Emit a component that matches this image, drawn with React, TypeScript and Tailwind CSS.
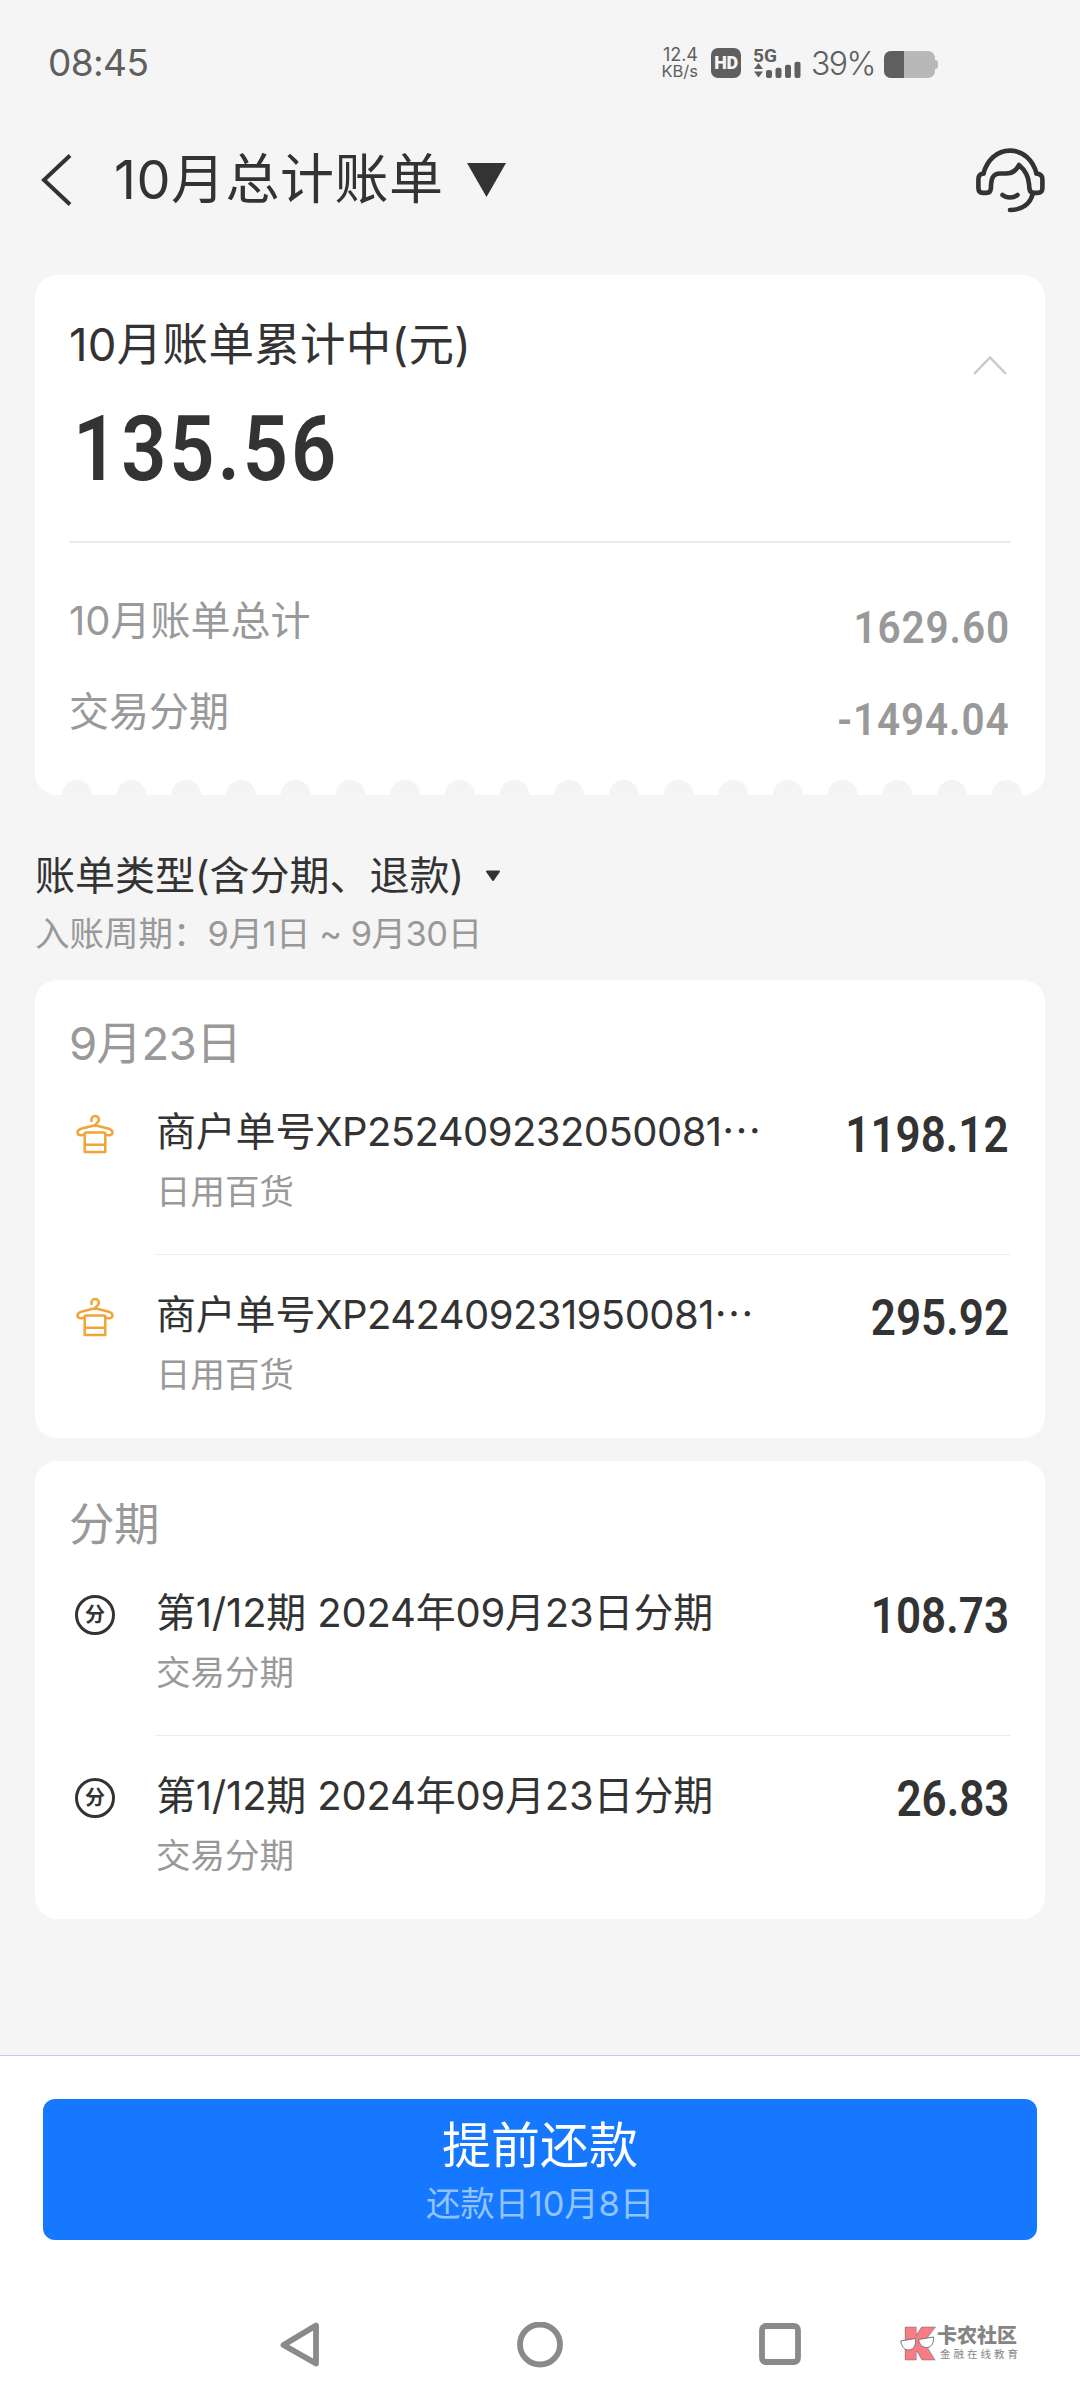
import type { ReactNode } from "react";
import clsx from "clsx";

type Entry = {
  title: string;
  serial?: string;
  category: string;
  amount: string;
};

const PURCHASES: Entry[] = [
  { title: "商户单号", serial: "XP252409232050081", category: "日用百货", amount: "1198.12" },
  { title: "商户单号", serial: "XP242409231950081", category: "日用百货", amount: "295.92" },
];

const INSTALLMENTS: Entry[] = [
  { title: "第1/12期 2024年09月23日分期", category: "交易分期", amount: "108.73" },
  { title: "第1/12期 2024年09月23日分期", category: "交易分期", amount: "26.83" },
];

const SUMMARY = [
  { label: "10月账单总计", amount: "1629.60" },
  { label: "交易分期", amount: "-1494.04" },
];

// half circles cut out of the bottom edge of the summary card
const NOTCHES = Array.from({ length: 18 }, (_, i) => 41.8 + i * 54.7);

function StatusBar() {
  return (
    <div className="flex h-[126px] items-center pl-[48px] pr-[142px] text-[#5f5f5f]">
      <span className="text-[37px] leading-[44px] tracking-[-0.6px]">08:45</span>
      <div className="ml-auto flex items-center">
        <div className="flex w-[38px] flex-col items-end">
          <span className="text-[18px] leading-[17px]">12.4</span>
          <span className="text-[16.5px] leading-[17px]">KB/s</span>
        </div>
        <div className="ml-[13px] flex h-[30px] w-[30px] items-center justify-center rounded-[7px] bg-[#5f5f5f] font-['Roboto'] text-[18px] font-black leading-none tracking-[-0.5px] text-[#f5f5f5]">
          HD
        </div>
        <svg className="ml-[12px] overflow-visible" width="50" height="30" viewBox="0 0 50 30" fill="currentColor">
          <text x="0" y="14" fontFamily="Roboto" fontWeight="700" fontSize="19" textLength="24" lengthAdjust="spacingAndGlyphs">
            5G
          </text>
          <path d="M5.5 15l4.5 6H1zM5.5 29.5l4.5-6H1z" />
          <rect x="13" y="22" width="6" height="8" rx="2" />
          <rect x="22.5" y="19.7" width="6" height="10.3" rx="2" />
          <rect x="32" y="16.7" width="6" height="13.3" rx="2" />
          <rect x="41.5" y="13.7" width="6" height="16.3" rx="2" />
        </svg>
        <span className="ml-[8px] mt-[2px] w-[64px] whitespace-nowrap text-[32px] font-light leading-[40px] tracking-[-1.6px]">39%</span>
        <svg className="ml-[9px] mt-[3px]" width="54" height="27" viewBox="0 0 54 27">
          <rect width="51" height="27" rx="7" fill="#b8b8b8" />
          <path d="M50 9h1a3 3 0 0 1 3 3v3a3 3 0 0 1-3 3h-1z" fill="#b8b8b8" />
          <path d="M7 0h13v27H7a7 7 0 0 1-7-7V7a7 7 0 0 1 7-7z" fill="#5f5f5f" />
        </svg>
      </div>
    </div>
  );
}

function Header() {
  return (
    <div className="flex h-[108px] items-center pl-[40px] pr-[35px]">
      <svg width="32" height="52" viewBox="0 0 32 52" fill="none" stroke="#333" strokeWidth="4">
        <path d="M30 1.5L4 26l26 24.5" />
      </svg>
      <h1 className="ml-[42px] whitespace-nowrap text-[54px] leading-[64px] tracking-[0.5px]">10月总计账单</h1>
      <svg className="ml-[23px]" width="39" height="34" viewBox="0 0 39 34" fill="#333">
        <path d="M0 0h39L19.5 34z" />
      </svg>
      <svg
        className="ml-auto"
        width="69"
        height="65"
        viewBox="0 0 69 65"
        fill="none"
        stroke="#333"
        strokeWidth="4.6"
        strokeLinecap="round"
        strokeLinejoin="round"
      >
        <path d="M7.5 25.5C11 12 21 2.6 34 2.6S57 12 60.5 25.5" />
        <path d="M7.5 25.5C4 26 2.4 28 2.4 31v9c0 3.5 1.6 4.9 4.4 4.9h3.5c3 0 4.4-1.6 4.6-4.6C15 31 16.5 25.5 24 25.5h6c6 0 10-2.5 13-8.5 7 6 9.5 12 10 19 .3 5.5.5 8.9 5 8.9h3.5c3.3 0 4.900-1.900 4.900-4.900v-9c0-3-1.900-5-5.900-5.500" />
        <path d="M57 45C54.5 56 46 62 34 62" />
        <path d="M26.5 47c4 3.300 11 3.300 15 0" />
      </svg>
    </div>
  );
}

function SummaryCard() {
  return (
    <section className="relative mx-[35px] mt-[41px] h-[520px] overflow-hidden rounded-[22px] bg-white px-[34px] pt-[40px]">
      <div className="flex items-start justify-between">
        <h2 className="text-[45.5px] leading-[60px] tracking-[0.3px]">10月账单累计中(元)</h2>
        <svg className="mr-[4px] mt-[40px]" width="34" height="20" viewBox="0 0 34 20" fill="none" stroke="#c9c9c9" strokeWidth="2.5">
          <path d="M1 19L17 2.5 33 19" />
        </svg>
      </div>
      <div className="ml-[4px] mt-[21px] origin-left scale-x-[0.88] font-['Roboto'] text-[90px] font-semibold leading-[108px] tracking-[3.3px]">
        135.56
      </div>
      <div className="mt-[37px] h-[2px] bg-[#ebebeb]" />
      <div className="mt-[32px] text-[#999]">
        {SUMMARY.map(({ label, amount }) => (
          <div key={label} className="flex h-[91.5px] items-center justify-between">
            <span className="text-[40px] leading-[50px]">{label}</span>
            <span className="mr-[1px] origin-right scale-x-[0.9] pt-[15px] font-['Roboto'] text-[45px] font-semibold leading-[50px] tracking-[1px]">
              {amount}
            </span>
          </div>
        ))}
      </div>
      <svg className="absolute bottom-0 left-0" width="1011" height="15" viewBox="0 0 1011 15" fill="#f4f4f4">
        {NOTCHES.map((x) => (
          <circle key={x} cx={x} cy="15" r="15" />
        ))}
      </svg>
    </section>
  );
}

function HangerIcon() {
  return (
    <svg width="52" height="52" viewBox="0 0 52 52" fill="none" stroke="#efa537" strokeWidth="2.5" strokeLinecap="round" strokeLinejoin="round">
      <path d="M22.5 13c-.5-3 1-5 3.7-5s4.3 2.5 3.5 5c-.6 1.8-3.5 2-3.5 5" />
      <path d="M15.7 26.5c-4 1.5-7.2.6-7.2-2s2-3.3 4.5-4L26 17.300l13 3.200c2.500.7 4.500 1.400 4.500 4s-3.200 3.500-7.200 2" />
      <path d="M15.7 26c0-1 .6-1.500 1.500-1.500h17.600c.9 0 1.500.5 1.500 1.500v18H15.700zM15.700 36.700h20.600" />
    </svg>
  );
}

function InstallmentIcon() {
  return (
    <div className="flex h-[40px] w-[40px] items-center justify-center rounded-full border-[3px] border-[#333] text-[20px] font-bold leading-none">
      分
    </div>
  );
}

function EntryCard({ title, entries, icon, className }: { title: string; entries: Entry[]; icon: ReactNode; className?: string }) {
  return (
    <section className={clsx("mx-[35px] h-[458px] rounded-[22px] bg-white pl-[34px] pr-[35px]", className)}>
      <h3 className="h-[92px] pt-[34px] text-[45.5px] leading-[59px] tracking-[-0.6px] text-[#999]">{title}</h3>
      {entries.map((entry, i) => (
        <div key={entry.amount} className="flex h-[183px]">
          <div className="mr-[34px] mt-[36px] flex h-[52px] w-[52px] items-center justify-center">{icon}</div>
          <div className={clsx("flex flex-1 justify-between pt-[35px]", i < entries.length - 1 && "border-b border-[#ececec]")}>
            <div className="pl-[1px]">
              <div className="h-[50px] whitespace-nowrap text-[40px] leading-[50px] tracking-[-0.2px]">
                {entry.title}
                {entry.serial && (
                  <>
                    <span className="tracking-[-0.55px]">{entry.serial}</span>
                    <span className="font-['Noto_Sans_CJK_SC'] leading-none">…</span>
                  </>
                )}
              </div>
              <div className="mt-[11px] text-[34.5px] leading-[48px] text-[#999]">{entry.category}</div>
            </div>
            <span className="mr-[1px] h-[54px] origin-right scale-x-[0.88] pt-[2px] font-['Roboto'] text-[50px] font-semibold leading-[52px]">
              {entry.amount}
            </span>
          </div>
        </div>
      ))}
    </section>
  );
}

function Watermark() {
  return (
    <div className="absolute left-[900px] top-[44px] flex text-[#858585]">
      <svg className="overflow-visible" width="35" height="37" viewBox="0 0 35 37" fontFamily="Roboto" fontWeight="900" fontSize="40" strokeLinejoin="miter">
        <text x="5" y="33" textLength="26" lengthAdjust="spacingAndGlyphs" fill="#8a7a7c" stroke="#8a7a7c" strokeWidth="4.5">
          K
        </text>
        <text x="5" y="33" textLength="26" lengthAdjust="spacingAndGlyphs" fill="#f97c84" stroke="#f97c84" strokeWidth="3" aria-hidden>
          K
        </text>
        <path d="M.7 16l14.5-2.5c1.5 5-1 11-6 11.5S1.5 21 .7 16z" fill="#fff" stroke="#777" />
        <path d="M18.5 14.5l15-2.5c.5 5-1.5 10-6 10.5-5 .5-8-3-9-8z" fill="#fff" stroke="#777" />
      </svg>
      <div className="ml-[2px] flex flex-col">
        <span className="text-[20px] font-black leading-[22px]">卡农社区</span>
        <span className="ml-[3px] mt-[1px] text-[10.5px] leading-[13px] tracking-[3px]">金融在线教育</span>
      </div>
    </div>
  );
}

function Footer() {
  return (
    <footer className="mt-auto h-[353px] border-t border-[#b9d0e6] bg-white">
      <button className="mx-[43px] mt-[43px] flex h-[141px] w-[994px] flex-col items-center rounded-[12px] bg-[#1677ff] pt-[16px]">
        <span className="text-[49px] leading-[62px] text-white">提前还款</span>
        <span className="mt-[3px] text-[34.5px] leading-[48px] tracking-[-0.2px] text-[#8fc4ff]">还款日10月8日</span>
      </button>
      <div className="relative mt-[41px] flex h-[126px] items-start pl-[278px] pt-[41px]">
        <svg className="w-[526px]" height="50" viewBox="0 0 526 50" fill="none" stroke="#8a8a8a" strokeWidth="5.8" strokeLinejoin="round">
          <path d="M5.5 23L38 3.5v38z" />
          <circle cx="262" cy="22.5" r="20" />
          <rect x="484" y="4" width="36" height="36" rx="4" />
        </svg>
        <Watermark />
      </div>
    </footer>
  );
}

export default function App() {
  return (
    <div className="flex h-[2408px] w-[1080px] flex-col overflow-hidden bg-[#f5f5f5] font-['Inter','Noto_Sans_CJK_SC',sans-serif] text-[#333]" lang="zh-CN">
      <StatusBar />
      <Header />
      <SummaryCard />
      <div className="mt-[51px] pl-[35px]">
        <div className="flex items-center text-[40px] leading-[60px]">
          账单类型(含分期、退款)
          <svg className="ml-[21px]" width="16" height="12" viewBox="0 0 16 12" fill="#333" stroke="#333" strokeWidth="2" strokeLinejoin="round">
            <path d="M2 1.5h12L8 10z" />
          </svg>
        </div>
        <div className="mt-[4px] text-[34.5px] leading-[48px] text-[#999]">
          入账周期：<span className="tracking-[-0.5px]">9月1日 ~ 9月30日</span>
        </div>
      </div>
      <EntryCard className="mt-[22px]" title="9月23日" entries={PURCHASES} icon={<HangerIcon />} />
      <EntryCard className="mt-[23px]" title="分期" entries={INSTALLMENTS} icon={<InstallmentIcon />} />
      <Footer />
    </div>
  );
}
